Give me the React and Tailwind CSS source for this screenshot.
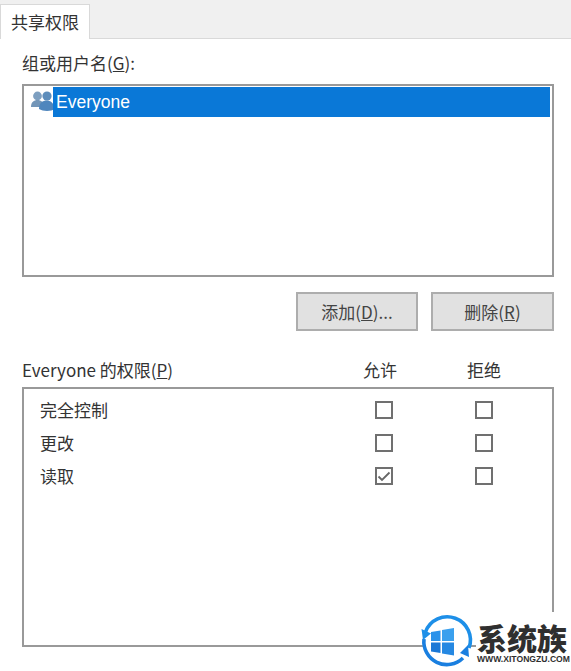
const CJK = { fontFamily: '"Noto Sans CJK SC", "Liberation Sans", sans-serif' };

function UsersIcon() {
  return (
    <svg width="26" height="24" viewBox="0 0 26 24" className="shrink-0 overflow-visible">
      <circle cx="6.5" cy="6" r="4.4" fill="#7d9fc0" />
      <path d="M0 17 C0 12 3 10 6.5 10 C10 10 13 12 13 17 Z" fill="#7396b8" />
      <circle cx="16" cy="6" r="4.6" fill="#5d8dbb" />
      <path d="M8 19 C8 12.5 12 10.5 15.5 10.5 C19.5 10.5 23 13 24 19 C20 21.5 12 21.5 8 19 Z" fill="#4f86bd" />
    </svg>
  );
}

function Check({ checked }) {
  return (
    <div className="w-[18px] h-[18px] border-2 border-[#707070] bg-white flex items-center justify-center">
      {checked && (
        <svg width="14" height="14" viewBox="0 0 14 14">
          <path d="M1.5 7.5 L5 11 L12.5 3.5" fill="none" stroke="#666" strokeWidth="1.8" />
        </svg>
      )}
    </div>
  );
}

function PermRow({ label, allow }) {
  return (
    <div className="h-[33px] flex items-center">
      <div className="w-[351px] pl-[16px] text-[17px] text-[#333]">{label}</div>
      <Check checked={allow} />
      <div className="w-[82px]" />
      <Check />
    </div>
  );
}

function Button({ children, className }) {
  return (
    <div className={`h-[39px] bg-[#e1e1e1] border-2 border-[#adadad] flex items-center justify-center text-[17px] text-[#444] ${className}`}>
      {children}
    </div>
  );
}

function Watermark() {
  return (
    <div className="absolute left-[416px] top-[612px] w-[155px] h-[59px] flex items-start">
      <svg width="60" height="59" viewBox="0 0 60 59" className="shrink-0">
        <circle cx="30.5" cy="30" r="24" fill="#fff" />
        <path d="M9.5 20 A23 23 0 0 1 53 36" fill="none" stroke="#1d8fe8" strokeWidth="3.6" />
        <path d="M8 27 A23 23 0 0 0 47 46" fill="none" stroke="#1a7fe0" strokeWidth="3.6" />
        <path d="M5.5 17 L15 21.5 L7 28 Z" fill="#1d8fe8" />
        <path d="M53 45 L44 41 L52 33 Z" fill="#1a7fe0" />
        <path d="M15 20 L24.5 18.4 L24.5 29 L15 29 Z" fill="#2a92ea" />
        <path d="M26 18 L38 16 L38 29 L26 29 Z" fill="#3aa0ee" />
        <path d="M15 30.5 L24.5 30.5 L24.5 41 L15 39.5 Z" fill="#1b78d6" />
        <path d="M26 30.5 L38 30.5 L38 43.5 L26 41.5 Z" fill="#2588e2" />
      </svg>
      <div className="flex flex-col bg-white w-[95px] h-[53px] pt-[8px] pl-[1px] text-[#2f2f2f]">
        <div className="text-[30px] h-[34px] font-black leading-[34px] whitespace-nowrap" style={CJK}>系统族</div>
        <div className="text-[8.6px] font-bold h-[11px] leading-[11px] whitespace-nowrap" style={{ fontFamily: '"Liberation Sans", sans-serif' }}>WWW.XITONGZU.COM</div>
      </div>
    </div>
  );
}

export default function App() {
  return (
    <div className="relative w-[571px] h-[671px] bg-white overflow-hidden text-[#333]" style={CJK}>
      <div className="h-[39px] bg-[#f0f0f0] border-b border-[#d9d9d9] pt-[4px]">
        <div className="w-[90px] h-[35px] bg-white border border-b-0 border-[#d9d9d9] flex items-center justify-center text-[17px] text-[#333]">
          共享权限
        </div>
      </div>
      <div className="pl-[22px] pr-[17px]">
        <div className="h-[45px] pt-[12px] text-[17px] leading-[24px]">
          组或用户名(<span className="underline">G</span>):
        </div>
        <div className="h-[193px] border-2 border-[#999] px-[1px] pt-[1px]">
          <div className="flex items-center">
            <div className="w-[28px] h-[30px] pl-[6px] flex items-center"><UsersIcon /></div>
            <div className="flex-1 h-[30px] bg-[#0a78d7] text-white flex items-center pl-[3px] text-[17.5px]" style={{ fontFamily: '"Liberation Sans", sans-serif' }}>
              Everyone
            </div>
            <div className="w-[1px]" />
          </div>
        </div>
        <div className="flex justify-end gap-[13px] pt-[15px]">
          <Button className="w-[122px]"><span>添加(<span className="underline">D</span>)...</span></Button>
          <Button className="w-[123px]"><span>删除(<span className="underline">R</span>)</span></Button>
        </div>
        <div className="h-[56px] flex items-end pb-[5px] text-[17px] leading-[24px]">
          <div className="w-[341px]">Everyone 的权限(<span className="underline">P</span>)</div>
          <div className="w-[104px]">允许</div>
          <div>拒绝</div>
        </div>
        <div className="h-[260px] border-2 border-[#999] pt-[4px]">
          <PermRow label="完全控制" />
          <PermRow label="更改" />
          <PermRow label="读取" allow />
        </div>
      </div>
      <Watermark />
    </div>
  );
}
